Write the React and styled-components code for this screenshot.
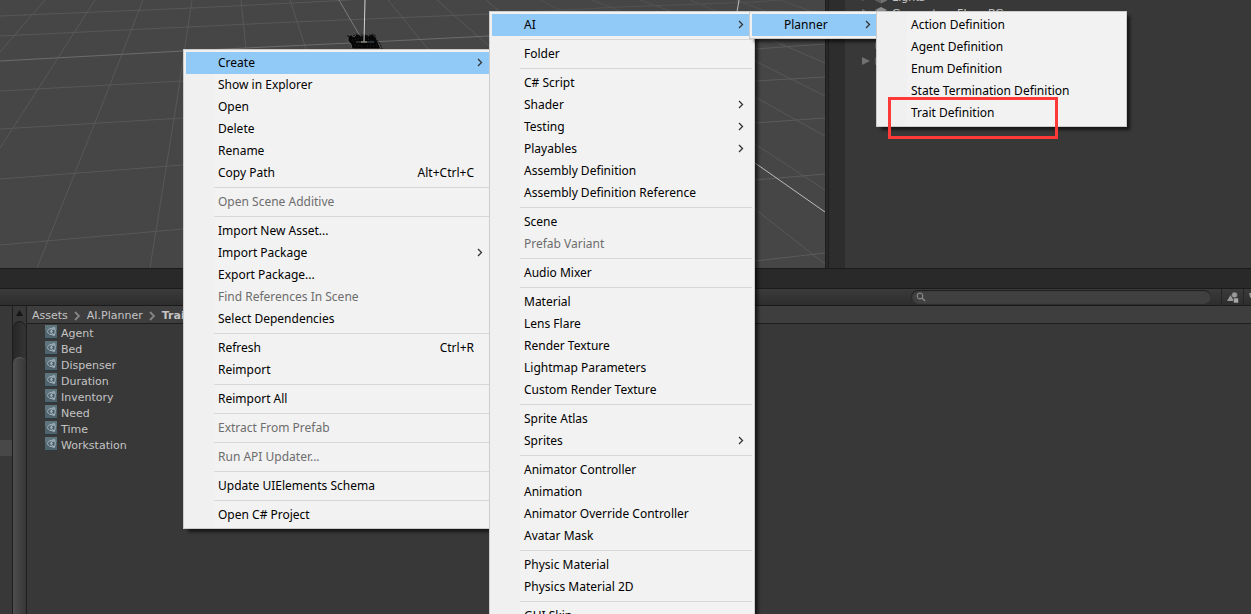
import React from 'react'
import styled, { createGlobalStyle } from 'styled-components'

const createMenu = [
  { label: 'Create', arrow: true, active: true },
  { label: 'Show in Explorer' },
  { label: 'Open' },
  { label: 'Delete' },
  { label: 'Rename' },
  { label: 'Copy Path', keys: 'Alt+Ctrl+C' },
  null,
  { label: 'Open Scene Additive', disabled: true },
  null,
  { label: 'Import New Asset...' },
  { label: 'Import Package', arrow: true },
  { label: 'Export Package...' },
  { label: 'Find References In Scene', disabled: true },
  { label: 'Select Dependencies' },
  null,
  { label: 'Refresh', keys: 'Ctrl+R' },
  { label: 'Reimport' },
  null,
  { label: 'Reimport All' },
  null,
  { label: 'Extract From Prefab', disabled: true },
  null,
  { label: 'Run API Updater...', disabled: true },
  null,
  { label: 'Update UIElements Schema' },
  null,
  { label: 'Open C# Project' },
]

const assetMenu = [
  { label: 'AI', arrow: true, active: true },
  null,
  { label: 'Folder' },
  null,
  { label: 'C# Script' },
  { label: 'Shader', arrow: true },
  { label: 'Testing', arrow: true },
  { label: 'Playables', arrow: true },
  { label: 'Assembly Definition' },
  { label: 'Assembly Definition Reference' },
  null,
  { label: 'Scene' },
  { label: 'Prefab Variant', disabled: true },
  null,
  { label: 'Audio Mixer' },
  null,
  { label: 'Material' },
  { label: 'Lens Flare' },
  { label: 'Render Texture' },
  { label: 'Lightmap Parameters' },
  { label: 'Custom Render Texture' },
  null,
  { label: 'Sprite Atlas' },
  { label: 'Sprites', arrow: true },
  null,
  { label: 'Animator Controller' },
  { label: 'Animation' },
  { label: 'Animator Override Controller' },
  { label: 'Avatar Mask' },
  null,
  { label: 'Physic Material' },
  { label: 'Physics Material 2D' },
  null,
  { label: 'GUI Skin' },
]

const plannerMenu = [{ label: 'Planner', arrow: true, active: true }]

const definitionMenu = [
  { label: 'Action Definition' },
  { label: 'Agent Definition' },
  { label: 'Enum Definition' },
  { label: 'State Termination Definition' },
  { label: 'Trait Definition' },
]

const assets = ['Agent', 'Bed', 'Dispenser', 'Duration', 'Inventory', 'Need', 'Time', 'Workstation']

const Menu = ({ items, label, ...place }) => (
  <MenuBox role="menu" aria-label={label} {...place}>
    {items.map((item, i) =>
      item ? (
        <MenuItem key={item.label} role="menuitem" disabled={item.disabled} $active={item.active}>
          <span>{item.label}</span>
          {item.keys && <Keys>{item.keys}</Keys>}
          {item.arrow && (
            <Arrow viewBox="0 0 6 9">
              <path d="M1 1l3.5 3.5L1 8" fill="none" stroke="#333" strokeWidth="1.3" />
            </Arrow>
          )}
        </MenuItem>
      ) : (
        <Separator key={i} />
      )
    )}
  </MenuBox>
)

const Scene = () => (
  <SceneView>
    <svg width="825" height="268" fill="none" stroke="#585858">
      <path d="M0 16L193 8L293 3L350 0M0 36L187 27L293 22L489 14M0 91L183 81M0 129L183 118M0 179L183 165M0 245L183 229" />
      <path d="M45 0L0 52M95 0L31 100L0 148M143 0L104 100L37 268M192 0L177 100L150 268M241 0L246 49M290 0L306 49M388 0L428 49M437 0L489 46M486 0L500 12" />
      <path d="M0 61L183 51L350 43L489 36" stroke="#6c6c6c" />
      <path d="M339 0L364 43" stroke="#7c7c7c" />
      <path d="M540 0L562 11M592 0L620 11M490 14L620 7L755 2L780 0M640 0L670 11M690 0L716 11M736 0L765 11M780 0L810 11" stroke="#525252" />
      <path d="M767 38L825 63M755 61L825 96M755 97L825 136M755 144L825 190M755 209L825 264" />
      <path d="M755 49L825 44M755 81L825 77M755 123L825 118M755 180L825 174M755 261L825 253" stroke="#5b5b5b" />
      <path d="M755 163L825 212M739 0L737 12" stroke="#bdbdbd" />
      <path d="M348 36l3-1 3 2 3-3 4 2 4-2 3 2 4-2 3 2 2 4 4 9H352l-1-5-3-3z" fill="#070707" />
      <path d="M347 36l3 0 3 0 4-2 3 2 4-2 4 2 4-2 3 1 1 4 4 5 2 5" stroke="#0c0c0c" strokeDasharray="2 1" />
      <path d="M352 40L362 38M368 39L375 42M355 45L362 46M367 46L377 45" stroke="#262626" strokeDasharray="1 2" />
      <path d="M365 0L364 42" stroke="#d2d2d2" />
      <path d="M356 42L374 42" stroke="#4c5660" />
      <path d="M361 42L367 42" stroke="#a5a58c" />
    </svg>
  </SceneView>
)

const CubeIcon = () => (
  <svg width="14" height="14" viewBox="0 0 14 14">
    <path d="M7 1l6 3-6 3-6-3z" fill="#8d8d8d" />
    <path d="M1 4l6 3v6.500l-6-3z" fill="#5d5d5d" />
    <path d="M13 4L7 7v6.500l6-3z" fill="#727272" />
  </svg>
)

const Fold = () => (
  <svg width="8" height="10" viewBox="0 0 8 10">
    <path d="M0 1l8 4-8 4z" fill="#707070" />
  </svg>
)

const AssetIcon = () => (
  <svg width="12" height="14" viewBox="0 0 12 14">
    <rect width="12" height="14" fill="#4e636c" />
    <rect width="12" height="5" fill="#5f757e" />
    <path d="M0 13.500H12" stroke="#293a42" />
    <path d="M1.800 6.500L4.500 4L9.500 2.500L10.300 6.500L9.500 10.500L4.500 9zM5 6.500L9 3.500M5 6.500L9 9.800M6 6.500h1.500" fill="none" stroke="#a9bbc2" />
  </svg>
)

const Crumb = () => (
  <svg width="7" height="10" viewBox="0 0 7 10">
    <path d="M1 1l4 4-4 4" fill="none" stroke="#858585" strokeWidth="1.800" />
  </svg>
)

const App = () => (
  <>
    <GlobalStyle />
    <Editor>
      <TopRow>
        <Scene />
        <Splitter />
        <Hierarchy>
          <Gutter />
          <Tree>
            <TreeRow><Fold /><CubeIcon /><Name>Lights</Name></TreeRow>
            <TreeRow><Fold /><CubeIcon /><Name>Generators Floor BG</Name></TreeRow>
            <TreeRow />
            <TreeRow $leaf><CubeIcon /></TreeRow>
            <TreeRow><Fold /><CubeIcon /></TreeRow>
          </Tree>
        </Hierarchy>
      </TopRow>
      <TabStrip />
      <Toolbar>
        <Search>
          <svg width="10" height="10" viewBox="0 0 10 10">
            <circle cx="4" cy="4" r="2.800" fill="none" stroke="#858585" strokeWidth="1.200" />
            <path d="M6 6l3 3" stroke="#858585" strokeWidth="1.600" />
          </svg>
          <SearchInput type="text" aria-label="Search assets" />
        </Search>
        <ToolButton aria-label="Search by type">
          <svg width="12" height="11" viewBox="0 0 12 11">
            <path d="M0 9l3.500-6L7 9z" fill="#9a9a9a" />
            <circle cx="7.500" cy="3" r="3" fill="#9a9a9a" stroke="#353535" strokeWidth=".6" />
            <rect x="6.500" y="6" width="5" height="5" fill="#a8a8a8" stroke="#353535" strokeWidth=".6" />
          </svg>
        </ToolButton>
        <ToolButton $cut aria-label="Search by label">
          <svg width="12" height="11" viewBox="0 0 12 11">
            <path d="M0 1h5l6 6-4 4-6-6z" fill="#9a9a9a" />
          </svg>
        </ToolButton>
      </Toolbar>
      <Project>
        <Folders><Selected /></Folders>
        <ScrollBar>
          <svg width="13" height="15" viewBox="0 0 13 15">
            <path d="M3 10l3.500-6L10 10z" fill="#151515" />
          </svg>
          <Track><Thumb /></Track>
        </ScrollBar>
        <Files>
          <Breadcrumb aria-label="Path">
            <a href="#assets">Assets</a>
            <Crumb />
            <a href="#planner">AI.Planner</a>
            <Crumb />
            <a href="#traits"><b>Traits</b></a>
          </Breadcrumb>
          <AssetList>
            {assets.map((name) => (
              <li key={name}>
                <AssetButton><AssetIcon /><Name>{name}</Name></AssetButton>
              </li>
            ))}
          </AssetList>
        </Files>
      </Project>
      <Menu items={createMenu} label="Assets" $left={183} $top={49} $width={311} />
      <Menu items={assetMenu} label="Create" $left={489} $top={11} $width={266} />
      <Menu items={plannerMenu} label="AI" $left={749} $top={11} $width={133} />
      <Menu items={definitionMenu} label="Planner" $left={876} $top={11} $width={251} />
      <Highlight />
    </Editor>
  </>
)

const GlobalStyle = createGlobalStyle`
  * {
    box-sizing: border-box;
  }
  body {
    margin: 0;
    background: #383838;
    overflow: hidden;
  }
  button {
    font: inherit;
    color: inherit;
    border: 0;
    padding: 0;
    background: none;
  }
  svg {
    display: block;
    flex: none;
  }
`;

const Editor = styled.main`
  position: relative;
  display: flex;
  flex-direction: column;
  height: 100vh;
  overflow: hidden;
  background: #383838;
  color: #c4c4c4;
  font: 11px/16px "DejaVu Sans", sans-serif;
`;

const TopRow = styled.div`
  display: flex;
  flex: 0 0 268px;
`;

const SceneView = styled.section`
  flex: 1;
  min-width: 0;
  overflow: hidden;
  background: #464646;
`;

const Splitter = styled.div`
  width: 4px;
  background: #292929;
  border: solid #1e1e1e;
  border-width: 0 1px;
`;

const Hierarchy = styled.section`
  display: flex;
  flex: 0 0 422px;
  overflow: hidden;
`;

const Gutter = styled.div`
  width: 16px;
  background: #2d2d2d;
`;

const Tree = styled.div`
  margin-top: -11px;
  padding-left: 17px;
`;

const TreeRow = styled.div`
  display: flex;
  align-items: center;
  gap: 4px;
  height: 16px;
  padding-left: ${(props) => (props.$leaf ? 12 : 0)}px;
`;

const Name = styled.span`
  line-height: 16px;
  padding-top: 1px;
`;

const TabStrip = styled.div`
  flex: 0 0 21px;
  background: #292929;
  border: solid #1b1b1b;
  border-width: 1px 0;
`;

const Toolbar = styled.div`
  display: flex;
  justify-content: flex-end;
  flex: 0 0 17px;
  background: linear-gradient(#3b3b3b, #2d2d2d);
  border-bottom: 1px solid #1b1b1b;
`;

const Search = styled.label`
  display: flex;
  align-items: center;
  width: 300px;
  height: 14px;
  margin: 1px 10px 0 0;
  padding: 0 5px;
  border-radius: 7px;
  background: #404040;
  box-shadow: inset 0 1px 1px #1e1e1e, inset 1px 0 1px #2b2b2b;
`;

const SearchInput = styled.input`
  flex: 1;
  min-width: 0;
  height: 12px;
  border: 0;
  outline: 0;
  background: none;
  color: inherit;
`;

const ToolButton = styled.button`
  display: flex;
  align-items: center;
  justify-content: ${(props) => (props.$cut ? 'flex-start' : 'center')};
  width: ${(props) => (props.$cut ? 8 : 22)}px;
  padding-left: ${(props) => (props.$cut ? 5 : 0)}px;
  border-left: 1px solid #242424;
  overflow: hidden;
`;

const Project = styled.section`
  display: flex;
  flex: 1;
  min-height: 0;
`;

const Folders = styled.div`
  width: 12px;
  padding-top: 134px;
`;

const Selected = styled.div`
  height: 16px;
  background: #484848;
`;

const ScrollBar = styled.div`
  display: flex;
  flex-direction: column;
  width: 15px;
  background: #383838;
  border: solid #1e1e1e;
  border-width: 0 1px;
`;

const Track = styled.div`
  flex: 1;
  padding-top: 36px;
  border-radius: 7px 7px 0 0;
  background: linear-gradient(90deg, #272727, #353535);
  box-shadow: inset 0 1px 1px #1e1e1e;
`;

const Thumb = styled.div`
  height: 100%;
  border-radius: 7px 7px 0 0;
  border-top: 1px solid #5c5c5c;
  background: linear-gradient(90deg, #4e4e4e, #363636);
`;

const Files = styled.div`
  flex: 1;
`;

const Breadcrumb = styled.nav`
  display: flex;
  align-items: center;
  gap: 6px;
  height: 18px;
  padding: 2px 0 0 5px;
  background: #3e3e3e;
  border-bottom: 1px solid #1e1e1e;

  a {
    color: inherit;
    text-decoration: none;
  }
`;

const AssetList = styled.ul`
  list-style: none;
  margin: 0;
  padding: 1px 0 0 18px;
`;

const AssetButton = styled.button`
  display: flex;
  align-items: flex-start;
  gap: 4px;
  height: 16px;
`;

const MenuBox = styled.div`
  position: absolute;
  left: ${(props) => props.$left}px;
  top: ${(props) => props.$top}px;
  width: ${(props) => props.$width}px;
  padding: 2px;
  border: 1px solid #ccc;
  background: linear-gradient(90deg, #f0f0f0 30px, #f2f2f2 30px);
  box-shadow: 4px 4px 3px -1px rgba(0, 0, 0, 0.6);
  color: #000;
  font: 12px/22px "Noto Sans", sans-serif;
`;

const MenuItem = styled.button`
  display: flex;
  align-items: center;
  justify-content: space-between;
  width: 100%;
  height: 22px;
  padding: 0 8px 1px 32px;
  text-align: left;
  white-space: nowrap;
  background: ${(props) => (props.$active ? '#91c9f7' : 'none')};

  &:disabled {
    color: #6d6d6d;
  }
`;

const Keys = styled.span`
  padding-right: 9px;
`;

const Arrow = styled.svg`
  width: 6px;
  height: 9px;
`;

const Separator = styled.hr`
  height: 1px;
  margin: 3px 0 3px 28px;
  border: 0;
  background: #d7d7d7;
`;

const Highlight = styled.div`
  position: absolute;
  left: 888px;
  top: 97px;
  width: 170px;
  height: 42px;
  border: 3px solid #ff3838;
  pointer-events: none;
`;

export default App
